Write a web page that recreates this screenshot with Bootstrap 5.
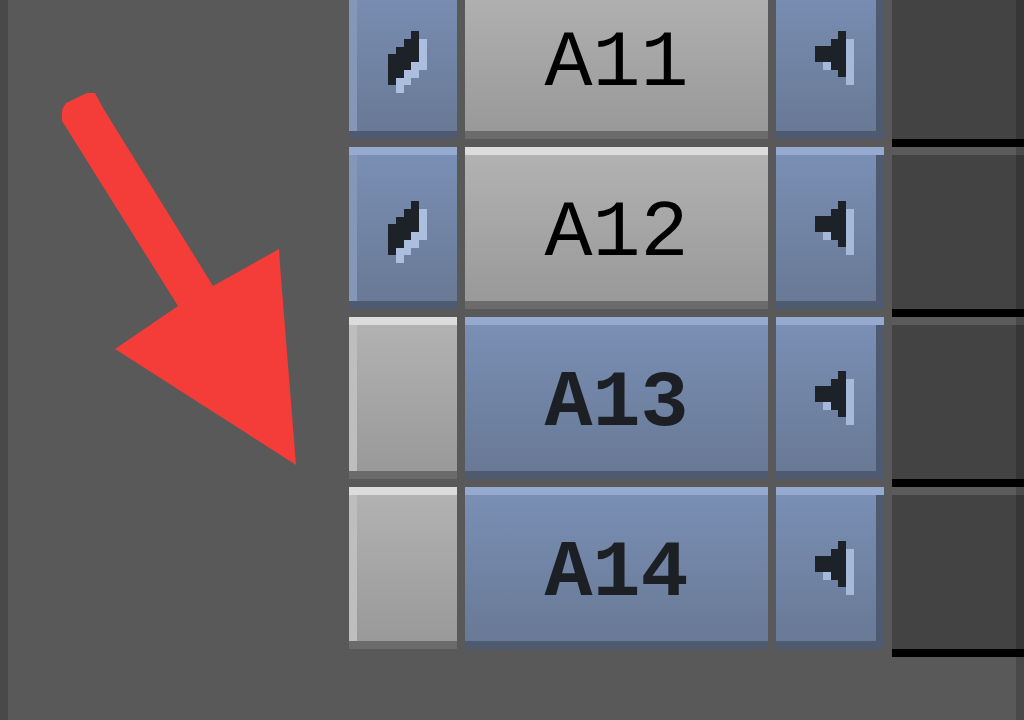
<!DOCTYPE html>
<html lang="en">
<head>
<meta charset="utf-8">
<meta name="viewport" content="width=device-width, initial-scale=1">
<title>Audio tracks</title>
<link href="https://cdn.jsdelivr.net/npm/bootstrap@5.3.0/dist/css/bootstrap.min.css" rel="stylesheet">
<style>
body { background: #595959; }
.panel { grid-template-columns: minmax(0, 1fr) auto; min-height: 100vh; }
.arrow-area { padding: 92px 0 0 61px; }
/* the list is scrolled so that its first row is partly hidden */
.tracks { margin-top: -23px; }
.track { height: 170px; }
.key {
  --top: #96aad0; --side: #8497b8; --low: #4d5a70; --from: #7a90b6; --to: #687894;
  height: 162px; padding: 0; border: 0; border-radius: 0; color: #1c2025;
  background:
    linear-gradient(var(--top), var(--top)) top / 100% 8px no-repeat,
    linear-gradient(var(--low), var(--low)) bottom / 100% 8px no-repeat,
    linear-gradient(var(--from), var(--to));
}
.key.plain { --top: #dcdcdc; --side: #bebebe; --low: #6b6b6b; --from: #b3b3b3; --to: #989898; color: #000; }
.solo, .speaker { width: 108px; }
.solo {
  padding: 8px 0 0 8px;
  background:
    linear-gradient(var(--top), var(--top)) top / 100% 8px no-repeat,
    linear-gradient(var(--low), var(--low)) bottom / 100% 8px no-repeat,
    linear-gradient(var(--side), var(--side)) left / 8px 100% no-repeat,
    linear-gradient(var(--from), var(--to));
}
.speaker {
  padding-left: 8px;
  background:
    linear-gradient(var(--top), var(--top)) top / 100% 8px no-repeat,
    linear-gradient(var(--low), var(--low)) bottom / 100% 8px no-repeat,
    linear-gradient(var(--low), var(--low)) right / 8px 100% no-repeat,
    linear-gradient(var(--from), var(--to));
}
.track-name { width: 303px; padding-top: 12px; font: 700 80px/80px "Liberation Mono", monospace; }
.track-name.plain { font-weight: 400; }
.lane { width: 132px; background: #434343; border-top: 8px solid #5b5b5b; border-bottom: 8px solid #000; }
.edges { border: solid rgba(0, 0, 0, .18); border-width: 0 8px; }
</style>
</head>
<body class="overflow-hidden">
<main class="panel d-grid position-relative">
  <div class="arrow-area">
    <svg width="236" height="374" viewBox="0 0 236 374" role="img" aria-label="Arrow pointing at the track buttons"><path fill="#f43d38" d="M1 18L5 11 26 1 34 1 42 16 152 194 218 157 219 173 235 373 54 257 117 214 1 29Z"/></svg>
  </div>
  <div class="tracks">
    <div class="track d-flex gap-2">
      <button type="button" class="key solo" aria-label="Patch A11"><svg width="39" height="62" viewBox="0 0 5 8" shape-rendering="crispEdges"><path fill="#acbee0" d="M4 1h1v4H4v1H3v1H2v1H1V6h1V5h1V4h1z"/><path fill="#1c2228" d="M3 0h1v4H3v1H2v1H1v1H0V3h1V2h1V1h1z"/></svg></button>
      <button type="button" class="key plain track-name">A11</button>
      <button type="button" class="key speaker" aria-label="Monitor A11"><svg width="39" height="54" viewBox="0 0 5 7" shape-rendering="crispEdges"><path fill="#a7b9d8" d="M4 1h1v6H4zM1 4h1v1H1z"/><path fill="#1c2228" d="M3 0h1v6H3V5H2V4H0V2h2V1h1z"/></svg></button>
      <div class="lane"></div>
    </div>
    <div class="track d-flex gap-2">
      <button type="button" class="key solo" aria-label="Patch A12"><svg width="39" height="62" viewBox="0 0 5 8" shape-rendering="crispEdges"><path fill="#acbee0" d="M4 1h1v4H4v1H3v1H2v1H1V6h1V5h1V4h1z"/><path fill="#1c2228" d="M3 0h1v4H3v1H2v1H1v1H0V3h1V2h1V1h1z"/></svg></button>
      <button type="button" class="key plain track-name">A12</button>
      <button type="button" class="key speaker" aria-label="Monitor A12"><svg width="39" height="54" viewBox="0 0 5 7" shape-rendering="crispEdges"><path fill="#a7b9d8" d="M4 1h1v6H4zM1 4h1v1H1z"/><path fill="#1c2228" d="M3 0h1v6H3V5H2V4H0V2h2V1h1z"/></svg></button>
      <div class="lane"></div>
    </div>
    <div class="track d-flex gap-2">
      <button type="button" class="key plain solo" aria-label="Patch A13"></button>
      <button type="button" class="key track-name">A13</button>
      <button type="button" class="key speaker" aria-label="Monitor A13"><svg width="39" height="54" viewBox="0 0 5 7" shape-rendering="crispEdges"><path fill="#a7b9d8" d="M4 1h1v6H4zM1 4h1v1H1z"/><path fill="#1c2228" d="M3 0h1v6H3V5H2V4H0V2h2V1h1z"/></svg></button>
      <div class="lane"></div>
    </div>
    <div class="track d-flex gap-2">
      <button type="button" class="key plain solo" aria-label="Patch A14"></button>
      <button type="button" class="key track-name">A14</button>
      <button type="button" class="key speaker" aria-label="Monitor A14"><svg width="39" height="54" viewBox="0 0 5 7" shape-rendering="crispEdges"><path fill="#a7b9d8" d="M4 1h1v6H4zM1 4h1v1H1z"/><path fill="#1c2228" d="M3 0h1v6H3V5H2V4H0V2h2V1h1z"/></svg></button>
      <div class="lane"></div>
    </div>
  </div>
  <div class="edges position-absolute top-0 start-0 w-100 h-100 pe-none"></div>
</main>
<script src="https://cdn.jsdelivr.net/npm/bootstrap@5.3.0/dist/js/bootstrap.bundle.min.js"></script>
</body>
</html>
